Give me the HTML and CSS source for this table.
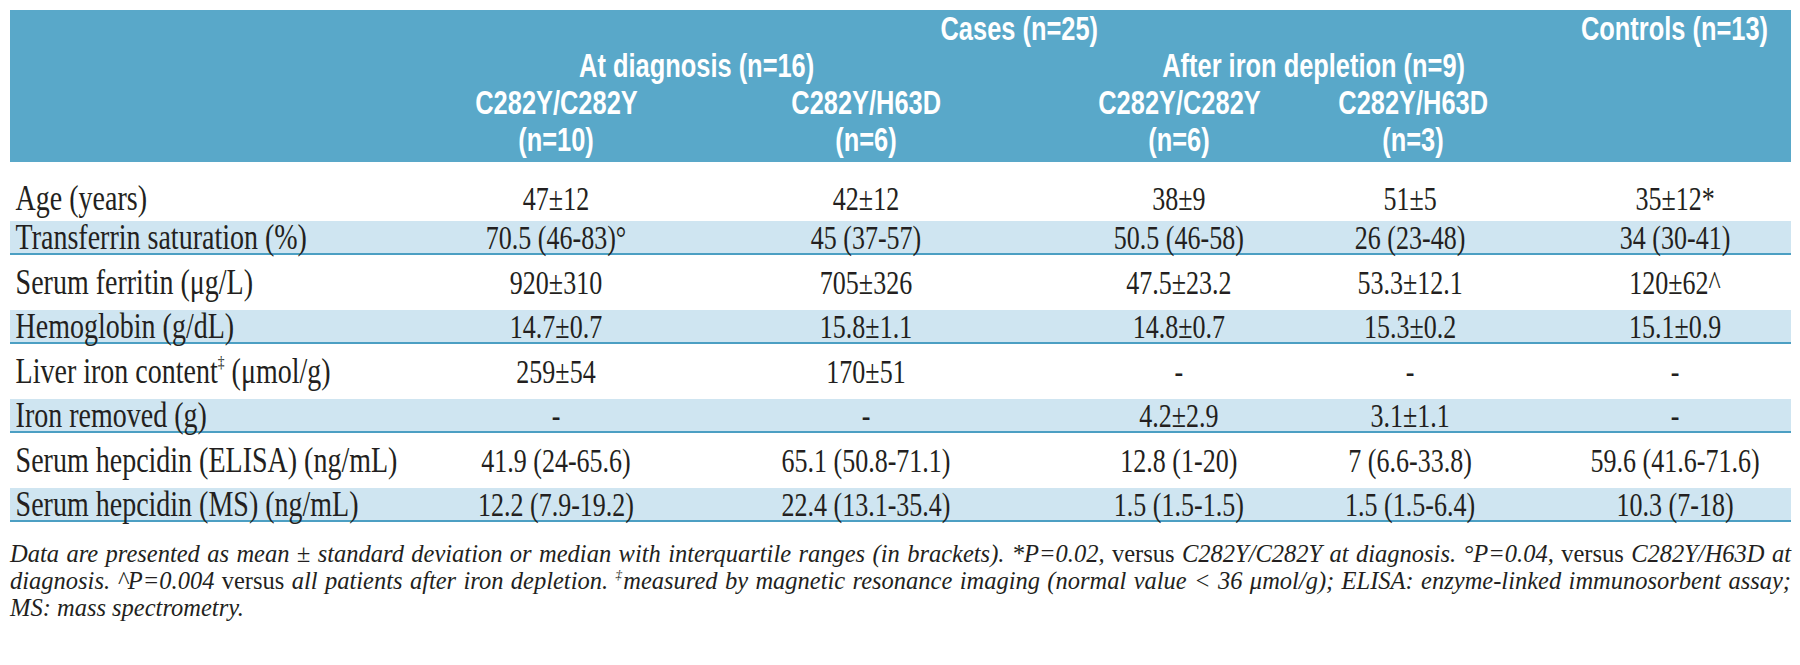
FILE: index.html
```html
<!DOCTYPE html>
<html lang="en">
<head>
<meta charset="utf-8">
<title>Table</title>
<link rel="stylesheet" href="styles.css">
</head>
<body>
<div class="page">
  <div class="thead cols">
    <div class="h cases"><span>Cases (n=25)</span></div>
    <div class="h controls"><span>Controls (n=13)</span></div>
    <div class="h diag"><span>At diagnosis (n=16)</span></div>
    <div class="h after"><span>After iron depletion (n=9)</span></div>
    <div class="h r3 k1"><span>C282Y/C282Y</span></div>
    <div class="h r3 k2"><span>C282Y/H63D</span></div>
    <div class="h r3 k3"><span>C282Y/C282Y</span></div>
    <div class="h r3 k4"><span>C282Y/H63D</span></div>
    <div class="h r4 k1"><span>(n=10)</span></div>
    <div class="h r4 k2"><span>(n=6)</span></div>
    <div class="h r4 k3"><span>(n=6)</span></div>
    <div class="h r4 k4"><span>(n=3)</span></div>
  </div>

  <div class="row cols first">
    <div class="lab">Age (years)</div>
    <div class="val">47±12</div><div class="val">42±12</div><div class="val v3">38±9</div><div class="val v4">51±5</div><div class="val v5">35±12*</div>
  </div>
  <div class="row cols alt">
    <div class="lab">Transferrin saturation (%)</div>
    <div class="val">70.5 (46-83)°</div><div class="val">45 (37-57)</div><div class="val v3">50.5 (46-58)</div><div class="val v4">26 (23-48)</div><div class="val v5">34 (30-41)</div>
  </div>
  <div class="row cols">
    <div class="lab">Serum ferritin (μg/L)</div>
    <div class="val">920±310</div><div class="val">705±326</div><div class="val v3">47.5±23.2</div><div class="val v4">53.3±12.1</div><div class="val v5">120±62^</div>
  </div>
  <div class="row cols alt">
    <div class="lab">Hemoglobin (g/dL)</div>
    <div class="val">14.7±0.7</div><div class="val">15.8±1.1</div><div class="val v3">14.8±0.7</div><div class="val v4">15.3±0.2</div><div class="val v5">15.1±0.9</div>
  </div>
  <div class="row cols">
    <div class="lab">Liver iron content<sup>‡</sup> (μmol/g)</div>
    <div class="val">259±54</div><div class="val">170±51</div><div class="val v3">-</div><div class="val v4">-</div><div class="val v5">-</div>
  </div>
  <div class="row cols alt">
    <div class="lab">Iron removed (g)</div>
    <div class="val">-</div><div class="val">-</div><div class="val v3">4.2±2.9</div><div class="val v4">3.1±1.1</div><div class="val v5">-</div>
  </div>
  <div class="row cols">
    <div class="lab">Serum hepcidin (ELISA) (ng/mL)</div>
    <div class="val">41.9 (24-65.6)</div><div class="val">65.1 (50.8-71.1)</div><div class="val v3">12.8 (1-20)</div><div class="val v4">7 (6.6-33.8)</div><div class="val v5">59.6 (41.6-71.6)</div>
  </div>
  <div class="row cols alt">
    <div class="lab">Serum hepcidin (MS) (ng/mL)</div>
    <div class="val">12.2 (7.9-19.2)</div><div class="val">22.4 (13.1-35.4)</div><div class="val v3">1.5 (1.5-1.5)</div><div class="val v4">1.5 (1.5-6.4)</div><div class="val v5">10.3 (7-18)</div>
  </div>

  <div class="notes">
    <span class="fl">Data are presented as mean ± standard deviation or median with interquartile ranges (in brackets). *P=0.02, <span class="up">versus</span> C282Y/C282Y at diagnosis. °P=0.04, <span class="up">versus</span> C282Y/H63D at</span>
    <span class="fl">diagnosis. ^P=0.004 <span class="up">versus</span> all patients after iron depletion. <sup>‡</sup>measured by magnetic resonance imaging (normal value &lt; 36 μmol/g); ELISA: enzyme-linked immunosorbent assay;</span>
    <span class="ll">MS: mass spectrometry.</span>
  </div>
</div>
</body>
</html>
```

FILE: styles.css
```css
html, body {
  margin: 0;
  padding: 0;
  background: #ffffff;
}

.page {
  padding: 10px 9px 0 10px;
  color: #231f20;
}

.cols {
  display: grid;
  grid-template-columns: 391px 310px 310px 279px 240px 251px;
}

/* ---------- header ---------- */
.thead {
  background: #59a8c9;
  grid-template-rows: repeat(4, 37px);
  padding-bottom: 4px;
  color: #ffffff;
  font-family: "Liberation Sans", Arial, sans-serif;
  font-weight: bold;
  font-size: 33px;
  line-height: 37px;
}

.h {
  display: flex;
  justify-content: center;
  white-space: nowrap;
}

.h span {
  display: inline-block;
  transform: scaleX(0.77);
}

.cases { grid-row: 1; grid-column: 2 / 6; padding-left: 97px; }
.controls { grid-row: 1; grid-column: 6; padding-left: 18px; }
.diag { grid-row: 2; grid-column: 2 / 4; padding-right: 28px; }
.after { grid-row: 2; grid-column: 4 / 6; padding-left: 66px; }
.r3 { grid-row: 3; }
.r4 { grid-row: 4; }
.k1 { grid-column: 2; }
.k2 { grid-column: 3; }
.k3 { grid-column: 4; padding-left: 37px; }
.k4 { grid-column: 5; padding-right: 14px; }

/* ---------- body rows ---------- */
.row {
  height: 55px;
  align-items: center;
  font-family: "Liberation Serif", "Times New Roman", serif;
  line-height: 34px;
}

.row.first {
  height: 59px;
  padding-top: 14px;
  box-sizing: border-box;
}

.row.alt {
  height: 32px;
  background: #cfe5f1;
  border-bottom: 2px solid #4c9fc3;
}

.lab {
  padding-left: 7px;
  font-size: 35px;
  white-space: nowrap;
  transform: scaleX(0.8);
  transform-origin: 0 50%;
}

.lab sup {
  font-size: 17px;
  vertical-align: 15px;
  line-height: 0;
}

.val {
  text-align: center;
  font-size: 34px;
  white-space: nowrap;
  transform: scaleX(0.765);
}

.v3 { padding-left: 48px; }
.v4 { padding-right: 26px; }
.v5 { padding-left: 25px; }

/* ---------- notes ---------- */
.notes {
  margin-top: 18px;
  font-family: "Liberation Serif", "Times New Roman", serif;
  font-style: italic;
  font-size: 24.5px;
  line-height: 27px;
  color: #231f20;
}

.notes .fl {
  display: block;
  text-align: justify;
  text-align-last: justify;
}

.notes .ll {
  display: block;
}

.notes .up {
  font-style: normal;
}

.notes sup {
  font-size: 13px;
  vertical-align: 10px;
  line-height: 0;
}
```
